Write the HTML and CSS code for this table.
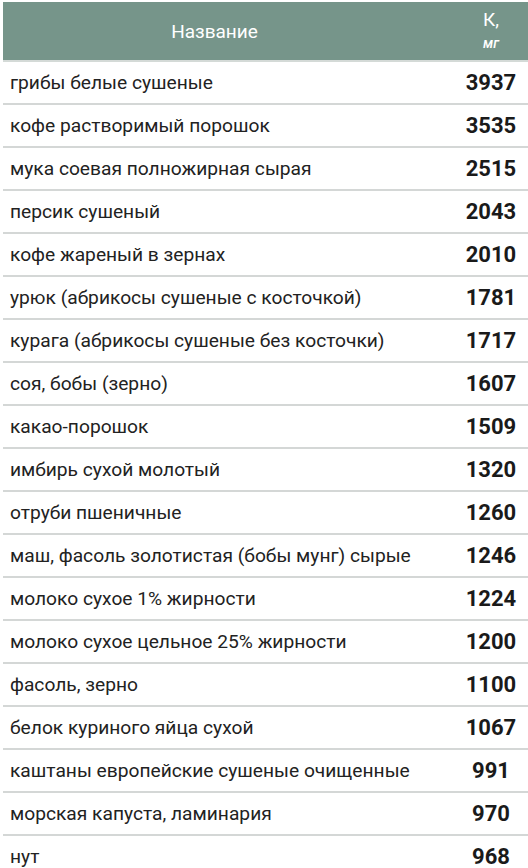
FILE: index.html
```html
<!DOCTYPE html>
<html lang="ru">
<head>
<meta charset="utf-8">
<link rel="stylesheet" href="styles.css">
</head>
<body>
<table class="tbl">
  <thead>
    <tr>
      <th class="h-name">Название</th>
      <th class="h-val">К,<br><span class="unit">мг</span></th>
    </tr>
  </thead>
  <tbody>
    <tr><td class="name">грибы белые сушеные</td><td class="val">3937</td></tr>
    <tr><td class="name">кофе растворимый порошок</td><td class="val">3535</td></tr>
    <tr><td class="name">мука соевая полножирная сырая</td><td class="val">2515</td></tr>
    <tr><td class="name">персик сушеный</td><td class="val">2043</td></tr>
    <tr><td class="name">кофе жареный в зернах</td><td class="val">2010</td></tr>
    <tr><td class="name">урюк (абрикосы сушеные с косточкой)</td><td class="val">1781</td></tr>
    <tr><td class="name">курага (абрикосы сушеные без косточки)</td><td class="val">1717</td></tr>
    <tr><td class="name">соя, бобы (зерно)</td><td class="val">1607</td></tr>
    <tr><td class="name">какао-порошок</td><td class="val">1509</td></tr>
    <tr><td class="name">имбирь сухой молотый</td><td class="val">1320</td></tr>
    <tr><td class="name">отруби пшеничные</td><td class="val">1260</td></tr>
    <tr><td class="name">маш, фасоль золотистая (бобы мунг) сырые</td><td class="val">1246</td></tr>
    <tr><td class="name">молоко сухое 1% жирности</td><td class="val">1224</td></tr>
    <tr><td class="name">молоко сухое цельное 25% жирности</td><td class="val">1200</td></tr>
    <tr><td class="name">фасоль, зерно</td><td class="val">1100</td></tr>
    <tr><td class="name">белок куриного яйца сухой</td><td class="val">1067</td></tr>
    <tr><td class="name">каштаны европейские сушеные очищенные</td><td class="val">991</td></tr>
    <tr><td class="name">морская капуста, ламинария</td><td class="val">970</td></tr>
    <tr><td class="name">нут</td><td class="val">968</td></tr>
  </tbody>
</table>
</body>
</html>
```
FILE: styles.css
```css
html, body {
  margin: 0;
  padding: 0;
  background: #ffffff;
}
body {
  padding: 2px 0 0 3px;
  font-family: Roboto, "Liberation Sans", Arial, sans-serif;
  color: #222222;
}
.tbl {
  border-collapse: collapse;
  width: 525px;
  table-layout: fixed;
}
.tbl th {
  background: #76958a;
  color: #ffffff;
  font-weight: 400;
  height: 58px;
  padding: 0;
  border-bottom: 2px solid #d4dad7;
}
.h-name {
  font-size: 19px;
  text-align: center;
  padding-right: 28px !important;
}
.h-val {
  width: 74px;
  font-size: 19px;
  line-height: 22px;
  text-align: center;
}
.unit {
  font-size: 14px;
  font-style: italic;
  font-weight: 500;
  line-height: 20px;
}
.tbl td {
  height: 41px;
  padding: 0;
  border-bottom: 2px solid #d4d7d6;
}
.name {
  font-size: 19.2px;
  padding-left: 7px !important;
  color: #222222;
}
.val {
  font-size: 22px;
  font-weight: 700;
  text-align: center;
  color: #1a1a1a;
}
```
